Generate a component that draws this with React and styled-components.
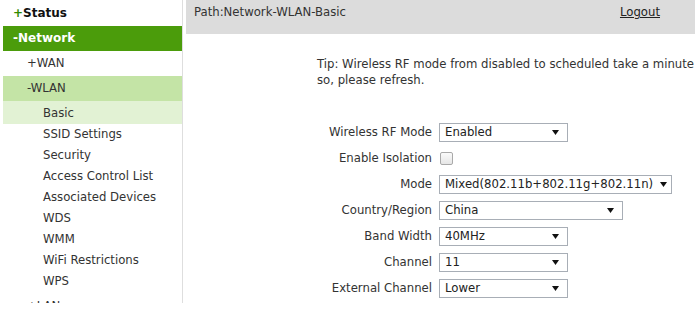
import React from "react";
import styled, { createGlobalStyle } from "styled-components";

const Global = createGlobalStyle`
  html, body { margin: 0; padding: 0; background: #fff; }
  body { font-family: "DejaVu Sans", Verdana, sans-serif; font-size: 11.7px; color: #333; }
  #root { width: 695px; height: 325px; overflow: hidden; }
`;

const Page = styled.div`
  display: flex;
  gap: 3px;
  width: 695px;
  height: 325px;
  overflow: hidden;
`;

const Sidebar = styled.nav`
  flex: 0 0 183px;
  height: 303px;
  overflow: hidden;
  border-right: 1px solid #dedede;
  box-sizing: border-box;
  padding-left: 3px;
`;

const TopItem = styled.div`
  height: ${(p) => p.$h || 25}px;
  line-height: ${(p) => p.$h || 25}px;
  padding-left: 10px;
  font-weight: bold;
  font-size: 12px;
  color: ${(p) => (p.$active ? "#fff" : "#111")};
  background: ${(p) => (p.$active ? "#4b9c0b" : "transparent")};
  white-space: nowrap;
`;

const Plus = styled.span`
  color: #2f8a00;
`;

const SubItem = styled.div`
  height: 25px;
  line-height: 25px;
  padding-left: 24px;
  color: #333;
  background: ${(p) => (p.$active ? "#c4e4a6" : "transparent")};
  white-space: nowrap;
`;

const LeafList = styled.div`
  padding-bottom: 2px;
`;

const Leaf = styled.div`
  height: ${(p) => (p.$active ? 23 : 21)}px;
  line-height: ${(p) => (p.$active ? 25 : 21)}px;
  padding-left: 40px;
  color: #333;
  background: ${(p) => (p.$active ? "#e2f2d4" : "transparent")};
  white-space: nowrap;
`;

const Main = styled.main`
  flex: 1;
  min-width: 0;
  display: flex;
  flex-direction: column;
`;

const Header = styled.header`
  height: 34px;
  background: #dcdcdc;
  display: flex;
  justify-content: space-between;
  align-items: flex-start;
  padding: 4px 35px 0 8px;
  box-sizing: border-box;
  line-height: 16px;
  color: #333;
`;

const Logout = styled.a`
  color: #222;
  text-decoration: underline;
  cursor: pointer;
`;

const Tip = styled.p`
  margin: 22px 0 0 131px;
  line-height: 16px;
  white-space: nowrap;
  color: #333;
`;

const Form = styled.div`
  margin-top: 31px;
  display: grid;
  grid-template-columns: 246px auto;
  column-gap: 7px;
  grid-auto-rows: 26px;
  align-items: center;
`;

const Label = styled.label`
  text-align: right;
  color: #333;
  white-space: nowrap;
`;

const SelectBox = styled.div`
  width: ${(p) => p.$w}px;
  height: 19px;
  box-sizing: border-box;
  border: 1px solid #a8aeb6;
  background: #fff;
  display: flex;
  align-items: center;
  padding: 0 ${(p) => (p.$tight ? 4 : 8)}px 0 5px;
  gap: ${(p) => (p.$tight ? 5 : 4)}px;
  color: #222;
`;

const SelectText = styled.span`
  flex: 1;
  overflow: hidden;
  white-space: nowrap;
`;

const Check = styled.span`
  display: block;
  width: 11px;
  height: 11px;
  margin-left: 1px;
  border: 1px solid #a9a9a9;
  border-radius: 2px;
  background: linear-gradient(#fafafa, #e6e6e6);
`;

const Arrow = () => (
  <svg width="7" height="5" viewBox="0 0 7 5">
    <path d="M0 0 H7 L3.5 5 Z" fill="#111" />
  </svg>
);

const Select = ({ w, value, tight }) => (
  <SelectBox $w={w} $tight={tight}>
    <SelectText>{value}</SelectText>
    <Arrow />
  </SelectBox>
);

const leaves = [
  "Basic",
  "SSID Settings",
  "Security",
  "Access Control List",
  "Associated Devices",
  "WDS",
  "WMM",
  "WiFi Restrictions",
  "WPS",
];

export default function App() {
  return (
    <>
      <Global />
      <Page>
        <Sidebar>
          <TopItem $h={26}>
            <Plus>+</Plus>Status
          </TopItem>
          <TopItem $active>-Network</TopItem>
          <SubItem>+WAN</SubItem>
          <SubItem $active>-WLAN</SubItem>
          <LeafList>
            {leaves.map((l, i) => (
              <Leaf key={l} $active={i === 0}>
                {l}
              </Leaf>
            ))}
          </LeafList>
          <SubItem>+LAN</SubItem>
        </Sidebar>
        <Main>
          <Header>
            <span>Path:Network-WLAN-Basic</span>
            <Logout>Logout</Logout>
          </Header>
          <Tip>
            Tip: Wireless RF mode from disabled to scheduled take a minute or
            <br />
            so, please refresh.
          </Tip>
          <Form>
            <Label>Wireless RF Mode</Label>
            <Select w={129} value="Enabled" />
            <Label>Enable Isolation</Label>
            <Check />
            <Label>Mode</Label>
            <Select w={233} value="Mixed(802.11b+802.11g+802.11n)" tight />
            <Label>Country/Region</Label>
            <Select w={184} value="China" />
            <Label>Band Width</Label>
            <Select w={129} value="40MHz" />
            <Label>Channel</Label>
            <Select w={129} value="11" />
            <Label>External Channel</Label>
            <Select w={129} value="Lower" />
          </Form>
        </Main>
      </Page>
    </>
  );
}
